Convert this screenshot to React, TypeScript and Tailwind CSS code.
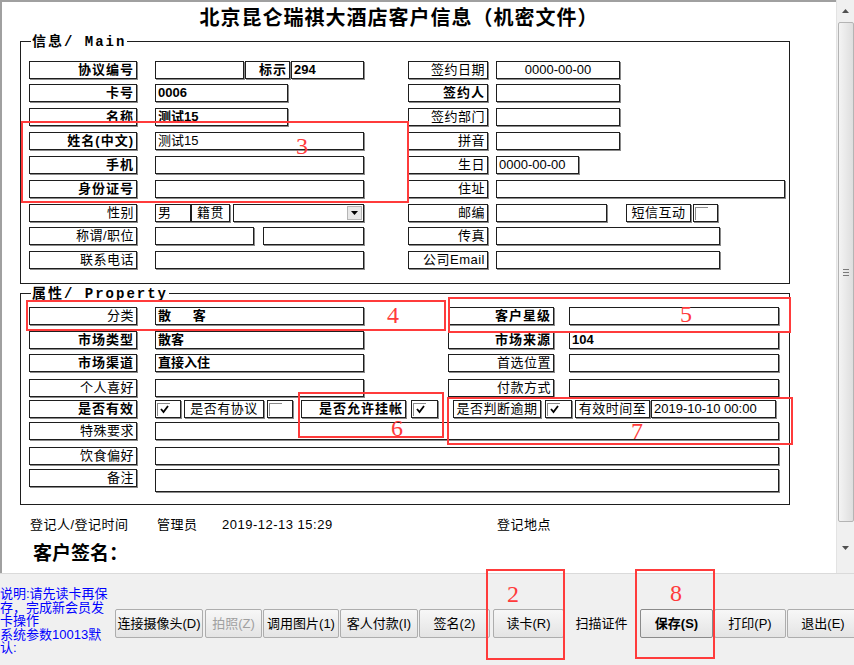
import React from 'react'

type BoxProps = {
  c: string
  b?: boolean
  children?: React.ReactNode
  align?: 'left' | 'center' | 'right'
}

const frame =
  'shrink-0 h-[18px] border border-[#1e1e1e] shadow-[1px_1px_0_#8a8a8a] bg-white text-[13px] leading-[16px] whitespace-pre overflow-hidden flex items-center'

// label box (right aligned by default)
function L({ c, b, children, align = 'right' }: BoxProps) {
  const j = align === 'right' ? 'justify-end pr-[2px]' : align === 'center' ? 'justify-center' : 'justify-start pl-[2px]'
  return <div className={`${frame} ${j} ${b ? 'font-bold tracking-[1px]' : 'tracking-[0.5px]'} ${c}`}>{children}</div>
}

// input box
function I({ c, b, children, align = 'left' }: BoxProps) {
  const j = align === 'center' ? 'justify-center' : 'justify-start pl-[2px]'
  return <div className={`${frame} ${j} ${b ? 'font-bold' : ''} ${c}`}>{children}</div>
}

function Check({ c, on }: { c: string; on?: boolean }) {
  return (
    <div className={`${frame} pl-[1px] ${c}`}>
      <div className="w-[13px] h-[13px] border-t border-l border-[#8a8a8a] bg-white flex items-center justify-center">
        {on && (
          <svg width="11" height="11" viewBox="0 0 11 11">
            <polyline points="2,5 4.5,8 9,2" fill="none" stroke="#000" strokeWidth="1.8" />
          </svg>
        )}
      </div>
    </div>
  )
}

function Combo({ c }: { c: string }) {
  return (
    <div className={`${frame} justify-end pr-[1px] ${c}`}>
      <div className="w-[15px] h-[14px] bg-[#e8e8e8] border border-[#b5b5b5] flex items-center justify-center">
        <svg width="7" height="4" viewBox="0 0 7 4">
          <polygon points="0,0 7,0 3.5,4" fill="#000" />
        </svg>
      </div>
    </div>
  )
}

function Btn({ c, children, bold, off }: { c: string; children: React.ReactNode; bold?: boolean; off?: boolean }) {
  return (
    <div
      className={`shrink-0 h-[29px] rounded-[2px] border ${bold ? 'border-[#8a8a8a] font-bold' : 'border-[#adadad]'} bg-gradient-to-b from-[#f7f7f7] to-[#e4e4e4] flex items-center justify-center text-[13px] whitespace-nowrap overflow-hidden ${off ? 'text-[#a0a0a0]' : 'text-black'} ${c}`}
    >
      {children}
    </div>
  )
}

function Row({ c, children }: { c?: string; children: React.ReactNode }) {
  return <div className={`flex items-start ${c ?? ''}`}>{children}</div>
}

const redBoxes = [
  'left-[21px] top-[121px] w-[388px] h-[82px]',
  'left-[26px] top-[300px] w-[420px] h-[31px]',
  'left-[448px] top-[297px] w-[343px] h-[36px]',
  'left-[298px] top-[392px] w-[146px] h-[46px]',
  'left-[447px] top-[397px] w-[346px] h-[48px]',
  'left-[486px] top-[569px] w-[79px] h-[91px]',
  'left-[635px] top-[569px] w-[80px] h-[90px]',
]

const redNums = [
  { n: '3', c: 'left-[296px] top-[134px]' },
  { n: '4', c: 'left-[387px] top-[303px]' },
  { n: '5', c: 'left-[680px] top-[302px]' },
  { n: '6', c: 'left-[391px] top-[416px]' },
  { n: '7', c: 'left-[631px] top-[419px]' },
  { n: '2', c: 'left-[507px] top-[582px]' },
  { n: '8', c: 'left-[670px] top-[581px]' },
]

export default function App() {
  return (
    <div className="relative w-[854px] h-[665px] overflow-hidden bg-white text-black font-['Liberation_Sans','Noto_Sans_CJK_SC',sans-serif]">
      <div className="flex h-[573px]">
        {/* form area */}
        <div className="w-[836px] h-[573px] border-l-2 border-t-2 border-[#a0a0a0] bg-white">
          <div className="h-[32px] flex items-center justify-center pr-[40px] text-[20px] font-bold tracking-[1px]">
            北京昆仑瑞祺大酒店客户信息（机密文件）
          </div>

          {/* 信息 / Main */}
          <div className="relative ml-[18px] mt-[7px] w-[770px] h-[243px] border border-[#1e1e1e] pt-[19px]">
            <div className="absolute left-[10px] top-[-10px] bg-white px-[1px] text-[14px] leading-[18px] font-bold tracking-[2px]">
              信息<span className="font-['Liberation_Mono',monospace]">/ Main</span>
            </div>

            <Row c="pl-[8px]">
              <L c="w-[108px]" b>协议编号</L>
              <I c="w-[89px] ml-[18px]" />
              <L c="w-[45px] ml-[1px]" b>标示</L>
              <I c="w-[73px] ml-[1px]" b>294</I>
              <L c="w-[80px] ml-[44px]">签约日期</L>
              <I c="w-[124px] ml-[8px]" align="center">0000-00-00</I>
            </Row>
            <Row c="pl-[8px] mt-[5px]">
              <L c="w-[108px]" b>卡号</L>
              <I c="w-[133px] ml-[18px]" b>0006</I>
              <L c="w-[80px] ml-[120px]" b>签约人</L>
              <I c="w-[124px] ml-[8px]" />
            </Row>
            <Row c="pl-[8px] mt-[6px]">
              <L c="w-[108px]" b>名称</L>
              <I c="w-[133px] ml-[18px]" b>测试15</I>
              <L c="w-[80px] ml-[120px]">签约部门</L>
              <I c="w-[124px] ml-[8px]" />
            </Row>
            <Row c="pl-[8px] mt-[6px]">
              <L c="w-[108px]" b>姓名(中文)</L>
              <I c="w-[209px] ml-[18px]">测试15</I>
              <L c="w-[80px] ml-[44px]">拼音</L>
              <I c="w-[124px] ml-[8px]" />
            </Row>
            <Row c="pl-[8px] mt-[6px]">
              <L c="w-[108px]" b>手机</L>
              <I c="w-[209px] ml-[18px]" />
              <L c="w-[80px] ml-[44px]">生日</L>
              <I c="w-[83px] ml-[8px]">0000-00-00</I>
            </Row>
            <Row c="pl-[8px] mt-[6px]">
              <L c="w-[108px]" b>身份证号</L>
              <I c="w-[209px] ml-[18px]" />
              <L c="w-[80px] ml-[44px]">住址</L>
              <I c="w-[289px] ml-[8px]" />
            </Row>
            <Row c="pl-[8px] mt-[6px]">
              <L c="w-[108px]">性别</L>
              <I c="w-[36px] ml-[18px]">男</I>
              <L c="w-[39px]" align="center">籍贯</L>
              <Combo c="w-[131px] ml-[3px]" />
              <L c="w-[80px] ml-[44px]">邮编</L>
              <I c="w-[111px] ml-[8px]" />
              <L c="w-[65px] ml-[19px]" align="center">短信互动</L>
              <Check c="w-[25px] ml-[2px]" />
            </Row>
            <Row c="pl-[8px] mt-[5px]">
              <L c="w-[108px]">称谓/职位</L>
              <I c="w-[99px] ml-[18px]" />
              <I c="w-[101px] ml-[9px]" />
              <L c="w-[80px] ml-[44px]">传真</L>
              <I c="w-[224px] ml-[8px]" />
            </Row>
            <Row c="pl-[8px] mt-[6px]">
              <L c="w-[108px]">联系电话</L>
              <I c="w-[209px] ml-[18px]" />
              <L c="w-[80px] ml-[44px]">公司Email</L>
              <I c="w-[224px] ml-[8px]" />
            </Row>
          </div>

          {/* 属性 / Property */}
          <div className="relative ml-[18px] mt-[9px] w-[770px] h-[212px] border border-[#1e1e1e] pt-[13px]">
            <div className="absolute left-[10px] top-[-10px] bg-white px-[1px] text-[14px] leading-[18px] font-bold tracking-[2px]">
              属性<span className="font-['Liberation_Mono',monospace]">/ Property</span>
            </div>

            <Row c="pl-[8px]">
              <L c="w-[108px]">分类</L>
              <I c="w-[209px] ml-[18px]" b>散      客</I>
              <L c="w-[106px] ml-[84px]" b>客户星级</L>
              <I c="w-[210px] ml-[15px]" />
            </Row>
            <Row c="pl-[8px] mt-[6px]">
              <L c="w-[108px]" b>市场类型</L>
              <I c="w-[209px] ml-[18px]" b>散客</I>
              <L c="w-[106px] ml-[84px]" b>市场来源</L>
              <I c="w-[210px] ml-[15px]" b>104</I>
            </Row>
            <Row c="pl-[8px] mt-[5px]">
              <L c="w-[108px]" b>市场渠道</L>
              <I c="w-[209px] ml-[18px]" b>直接入住</I>
              <L c="w-[106px] ml-[84px]">首选位置</L>
              <I c="w-[210px] ml-[15px]" />
            </Row>
            <Row c="pl-[8px] mt-[7px]">
              <L c="w-[108px]">个人喜好</L>
              <I c="w-[209px] ml-[18px]" />
              <L c="w-[106px] ml-[84px]">付款方式</L>
              <I c="w-[210px] ml-[15px]" />
            </Row>
            <Row c="pl-[8px] mt-[3px]">
              <L c="w-[108px]" b>是否有效</L>
              <Check c="w-[26px] ml-[18px]" on />
              <L c="w-[80px] ml-[3px]" align="center">是否有协议</L>
              <Check c="w-[26px] ml-[3px]" />
              <L c="w-[105px] ml-[8px]" b>是否允许挂帐</L>
              <Check c="w-[27px] ml-[5px]" on />
              <L c="w-[88px] ml-[15px]" align="center">是否判断逾期</L>
              <Check c="w-[27px] ml-[4px]" on />
              <L c="w-[75px] ml-[3px]" align="center">有效时间至</L>
              <I c="w-[125px] ml-[1px]">2019-10-10 00:00</I>
            </Row>
            <Row c="pl-[8px] mt-[4px]">
              <L c="w-[108px]">特殊要求</L>
              <I c="w-[624px] ml-[18px]" />
            </Row>
            <Row c="pl-[8px] mt-[7px]">
              <L c="w-[108px]">饮食偏好</L>
              <I c="w-[624px] ml-[18px]" />
            </Row>
            <Row c="pl-[8px] mt-[4px]">
              <L c="w-[108px]">备注</L>
              <I c="w-[624px] ml-[18px] !h-[23px]" />
            </Row>
          </div>

          <div className="flex items-center mt-[12px] h-[16px] text-[13px] tracking-[0.5px]">
            <span className="ml-[28px] w-[127px]">登记人/登记时间</span>
            <span className="w-[65px]">管理员</span>
            <span className="w-[275px]">2019-12-13 15:29</span>
            <span>登记地点</span>
          </div>
          <div className="mt-[9px] h-[24px] flex items-center ml-[31px] text-[19px] font-bold">客户签名：</div>
        </div>

        {/* scrollbar */}
        <div className="w-[18px] h-[573px] bg-[#f0f0f0] border-l border-[#e3e3e3] flex flex-col items-center">
          <div className="h-[22px] flex items-center justify-center">
            <svg width="7" height="4" viewBox="0 0 7 4">
              <polygon points="0,4 7,4 3.5,0" fill="#505050" />
            </svg>
          </div>
          <div className="w-[16px] h-[500px] rounded-[2px] border border-[#b4b4b4] bg-gradient-to-r from-[#f4f4f4] to-[#dedede] flex items-center justify-center">
            <div className="flex flex-col gap-[2px]">
              <div className="w-[6px] h-px bg-[#7a7a7a]" />
              <div className="w-[6px] h-px bg-[#7a7a7a]" />
              <div className="w-[6px] h-px bg-[#7a7a7a]" />
            </div>
          </div>
          <div className="flex-1 flex items-center justify-center">
            <svg width="7" height="4" viewBox="0 0 7 4">
              <polygon points="0,0 7,0 3.5,4" fill="#505050" />
            </svg>
          </div>
        </div>
      </div>

      {/* bottom bar */}
      <div className="h-[92px] bg-[#f0f0f0] border-t border-[#dadada] flex items-start">
        <div className="w-[115px] shrink-0 pt-[13px] text-[13px] leading-[13.5px] text-[#0000ff]">
          说明:请先读卡再保<br />存，完成新会员发<br />卡操作<br />系统参数10013默<br />认:
        </div>
        <div className="flex items-start pt-[35px]">
          <Btn c="w-[88px]">连接摄像头(D)</Btn>
          <Btn c="w-[57px] ml-[2px]" off>拍照(Z)</Btn>
          <Btn c="w-[76px] ml-[1px]">调用图片(1)</Btn>
          <Btn c="w-[78px] ml-[1px]">客人付款(I)</Btn>
          <Btn c="w-[71px] ml-[1px]">签名(2)</Btn>
          <Btn c="w-[71px] ml-[3px]">读卡(R)</Btn>
          <div className="w-[73px] ml-[1px] h-[29px] flex items-center justify-center text-[13px] shrink-0">扫描证件</div>
          <Btn c="w-[73px] ml-[2px]" bold>保存(S)</Btn>
          <Btn c="w-[72px] ml-[1px]">打印(P)</Btn>
          <Btn c="w-[72px] ml-[1px]">退出(E)</Btn>
        </div>
      </div>

      {/* red annotation overlays */}
      {redBoxes.map((c, i) => (
        <div key={i} className={`absolute border-2 border-[#ff3b3b] pointer-events-none ${c}`} />
      ))}
      {redNums.map(({ n, c }) => (
        <div key={n} className={`absolute text-[24px] leading-[24px] text-[#ff3b3b] font-['Liberation_Serif',serif] ${c}`}>
          {n}
        </div>
      ))}
    </div>
  )
}
